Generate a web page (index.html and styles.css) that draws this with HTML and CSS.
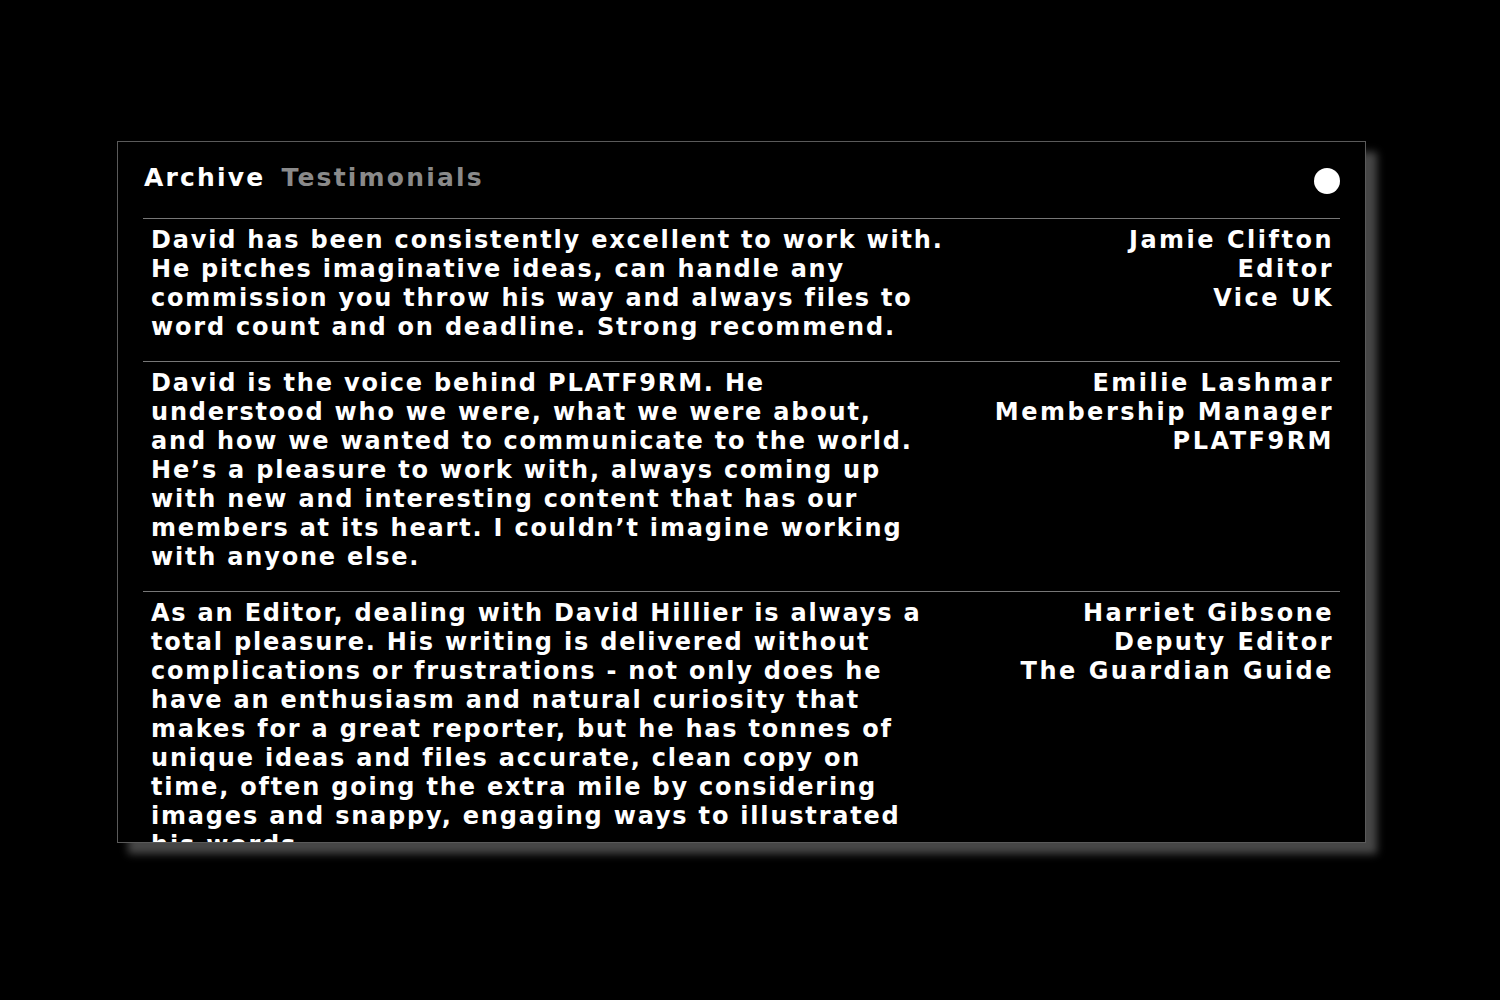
FILE: index.html
```html
<!DOCTYPE html>
<html lang="en">
<head>
<meta charset="utf-8">
<title>Archive – Testimonials</title>
<link rel="stylesheet" href="styles.css">
</head>
<body>
<div class="panel">
  <header class="top">
    <nav class="crumbs">
      <span class="crumb">Archive</span>
      <span class="crumb crumb-dim">Testimonials</span>
    </nav>
    <span class="dot"></span>
  </header>
  <section class="list">
    <article class="row">
      <p class="quote">David has been consistently excellent to work with.<br>He pitches imaginative ideas, can handle any<br>commission you throw his way and always files to<br>word count and on deadline. Strong recommend.</p>
      <p class="who">Jamie Clifton<br>Editor<br>Vice UK</p>
    </article>
    <article class="row">
      <p class="quote">David is the voice behind PLATF9RM. He<br>understood who we were, what we were about,<br>and how we wanted to communicate to the world.<br>He’s a pleasure to work with, always coming up<br>with new and interesting content that has our<br>members at its heart. I couldn’t imagine working<br>with anyone else.</p>
      <p class="who">Emilie Lashmar<br>Membership Manager<br>PLATF9RM</p>
    </article>
    <article class="row">
      <p class="quote">As an Editor, dealing with David Hillier is always a<br>total pleasure. His writing is delivered without<br>complications or frustrations - not only does he<br>have an enthusiasm and natural curiosity that<br>makes for a great reporter, but he has tonnes of<br>unique ideas and files accurate, clean copy on<br>time, often going the extra mile by considering<br>images and snappy, engaging ways to illustrated<br>his words.</p>
      <p class="who">Harriet Gibsone<br>Deputy Editor<br>The Guardian Guide</p>
    </article>
  </section>
</div>
</body>
</html>
```
FILE: styles.css
```css
html, body {
  margin: 0;
  padding: 0;
  background: #000;
}
body {
  font-family: "DejaVu Sans", sans-serif;
  font-weight: bold;
  color: #fff;
  padding: 141px 0 0 117px;
  min-height: 1000px;
  box-sizing: border-box;
}
.panel {
  width: 1249px;
  height: 702px;
  box-sizing: border-box;
  border: 1px solid #5a5a5a;
  box-shadow: 11px 11px 8px #474747;
  background: #000;
  overflow: hidden;
  padding: 0 25px;
}
.top {
  height: 76px;
  display: flex;
  align-items: center;
  justify-content: space-between;
}
.crumbs {
  display: flex;
  gap: 16px;
  font-size: 25px;
  letter-spacing: 2.2px;
  padding-left: 1px;
  margin-top: -6px;
}
.crumb-dim { color: #8a8a8a; }
.dot {
  width: 26px;
  height: 26px;
  border-radius: 50%;
  background: #fff;
  margin-top: 1px;
}
.row {
  border-top: 1px solid #777;
  display: flex;
  justify-content: space-between;
  gap: 24px;
  padding: 7px 6px 19px 8px;
  font-size: 24px;
  line-height: 29px;
  letter-spacing: 1.8px;
}
.row p { margin: 0; }
.quote { white-space: nowrap; }
.who {
  text-align: right;
  letter-spacing: 2.5px;
  white-space: nowrap;
}
```
